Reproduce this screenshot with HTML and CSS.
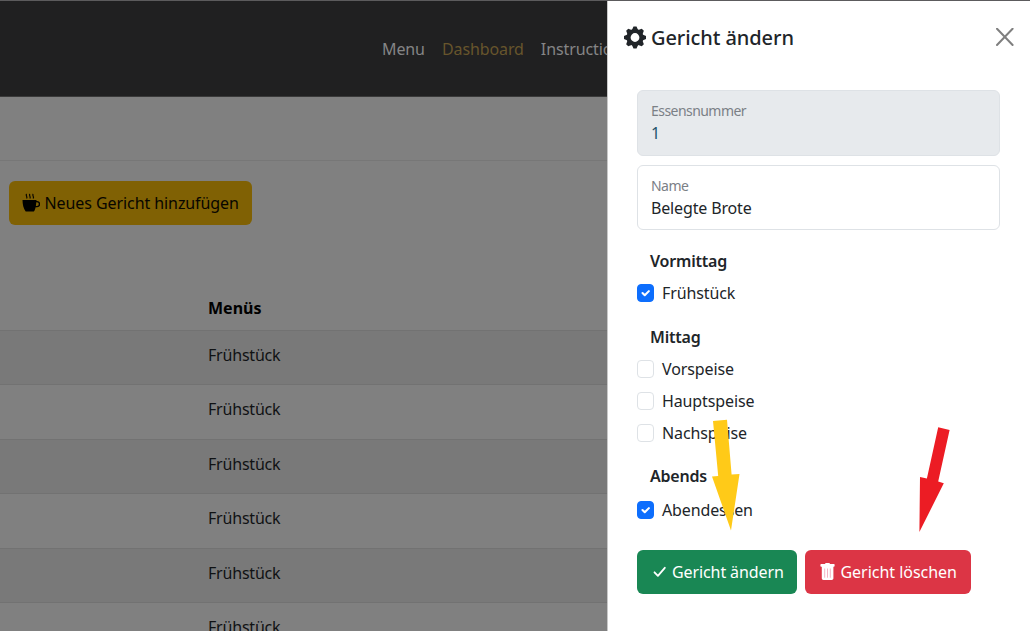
FILE: index.html
```html
<!DOCTYPE html>
<html lang="de">
<head>
<meta charset="utf-8">
<title>Gericht ändern</title>
<link rel="stylesheet" href="styles.css">
</head>
<body>
<div class="app">
  <main class="page">
    <nav class="navbar"><a class="nav-menu">Menu</a><a class="active">Dashboard</a><a class="nav-inst">Instructions</a></nav>
    <div class="subbar"></div>
    <div class="toolbar">
      <button class="btn btn-new">
        <svg width="18" height="20" viewBox="0 0 18 20"><path d="M.5 7h14v1h.6a2.600 2.600 0 0 1 0 6.200h-1.500c-.4 1.500-.8 3.300-1.800 4.300H3.700C1.400 15.500.5 11 .5 7zm13.800 2.200-.4 3.800h1a1.700 1.700 0 0 0 0-3.800z"/><path d="M4.600 1c-1.500 1.500 1.300 2.500 0 4.500M7.900 1c-1.500 1.500 1.300 2.500 0 4.500M11.200 1c-1.500 1.500 1.300 2.500 0 4.500" fill="none" stroke="#080600" stroke-width="1.200"/></svg>
        <span>Neues Gericht hinzufügen</span>
      </button>
    </div>
    <div class="table">
      <div class="head">Menüs</div>
      <div class="row odd">Frühstück</div>
      <div class="row">Frühstück</div>
      <div class="row odd">Frühstück</div>
      <div class="row">Frühstück</div>
      <div class="row odd">Frühstück</div>
      <div class="row">Frühstück</div>
    </div>
  </main>
  <aside class="panel">
    <header class="panel-head">
      <svg class="gear" width="22" height="23" viewBox="-11 -11.500 22 23">
        <circle r="6.400" fill="none" stroke="#212529" stroke-width="4"/>
        <g fill="#212529"><path id="t" d="M-3.300-7-1.500-11H1.500L3.300-7z"/><use href="#t" transform="rotate(45)"/><use href="#t" transform="rotate(90)"/><use href="#t" transform="rotate(135)"/><use href="#t" transform="rotate(180)"/><use href="#t" transform="rotate(225)"/><use href="#t" transform="rotate(270)"/><use href="#t" transform="rotate(315)"/></g>
      </svg>
      <h1>Gericht ändern</h1>
      <svg class="close" width="18" height="19" viewBox="0 0 18 19"><path d="M1 .8l15.600 16.200M16.600.8L1 17" stroke="#7f7f7f" stroke-width="2" stroke-linecap="round"/></svg>
    </header>
    <form class="form">
      <div class="field disabled"><label>Essensnummer</label><div class="value number">1</div></div>
      <div class="field"><label>Name</label><div class="value">Belegte Brote</div></div>
      <section class="group vormittag">
        <h2>Vormittag</h2>
        <div class="check"><i class="box on"><svg viewBox="0 0 20 20"><path d="M6 10l3 3 5.500-5.500"/></svg></i><span>Frühstück</span></div>
      </section>
      <section class="group mittag">
        <h2>Mittag</h2>
        <div class="check"><i class="box"></i><span>Vorspeise</span></div>
        <div class="check"><i class="box"></i><span>Hauptspeise</span></div>
        <div class="check"><i class="box"></i><span>Nachspeise</span></div>
      </section>
      <section class="group abends">
        <h2>Abends</h2>
        <div class="check"><i class="box on"><svg viewBox="0 0 20 20"><path d="M6 10l3 3 5.500-5.500"/></svg></i><span>Abendessen</span></div>
      </section>
      <div class="actions">
        <button type="button" class="btn save"><svg width="14" height="12" viewBox="0 0 14 12"><path d="M1.500 6.300l3.400 3.600L11.800 1.800" fill="none" stroke="#fff" stroke-width="1.800" stroke-linecap="round" stroke-linejoin="round"/></svg><span>Gericht ändern</span></button>
        <button type="button" class="btn delete"><svg width="15" height="18" viewBox="0 0 15 18"><path fill="#fff" fill-rule="evenodd" d="M1.200.9H5L5.600 0h3.800l.6.900h3.800c.6 0 .8.400.8.800v1.200c0 .5-.3.800-.8.800h-.4V15.300c0 1-.8 1.700-1.700 1.700H3.500c-1 0-1.700-.7-1.700-1.700V3.700h-.6c-.5 0-.8-.3-.8-.8V1.700c0-.4.3-.8.800-.8z"/><path d="M4.700 5.500v9.200M7.500 5.500v9.200M10.300 5.500v9.200" stroke="#f3b4c4" stroke-width="1"/></svg><span>Gericht löschen</span></button>
      </div>
    </form>
  </aside>
  <svg class="arrows" width="1030" height="631" viewBox="0 0 1030 631">
    <path fill="#ffca18" d="M713 421l14-1.200 4.600 54.700 7.900-.6L731 530.500l-19-54 6.200-.5z"/>
    <path fill="#ec1c24" d="M938.200 427.200l11.400 2.900-11.400 51.500 5.600 1.700L919.400 532l.6-55 6.900 1.600z"/>
  </svg>
</div>
</body>
</html>
```
FILE: styles.css
```css
* { box-sizing: border-box; }
body { margin: 0; font-family: "Noto Sans", "Open Sans", sans-serif; font-size: 16px; color: #212529; }
.app { position: relative; display: flex; width: 1030px; height: 631px; overflow: hidden; border-top: 1px solid #5c5b5d; background: #fff; }
.page { width: 607px; height: 630px; overflow: hidden; background: #808080; color: #101214; }
.navbar { display: flex; gap: 17px; height: 96px; padding-left: 382px; line-height: 97px; background: #202021; border-bottom: 1px solid #3a3a3a; color: #858586; white-space: nowrap; letter-spacing: -.1px; }
.navbar .active { color: #67552c; }
.subbar { height: 64px; border-bottom: 1px solid #777; }
.toolbar { height: 125px; padding: 20px 0 0 9px; }
.btn { display: flex; align-items: center; height: 43.500px; border: 0; border-radius: 6px; font: inherit; white-space: nowrap; }
.btn-new { width: 243px; padding: 0 0 0 13px; gap: 4.500px; background: #806104; color: #080600; letter-spacing: -.08px; }
.head { height: 45px; padding-left: 208px; border-bottom: 1px solid #727272; line-height: 44px; font-weight: 700; color: #000; }
.row { height: 54.450px; padding-left: 208px; border-bottom: 1px solid #727272; line-height: 48px; letter-spacing: -.2px; }
.odd { background: #797979; }
.panel { width: 423px; height: 630px; background: #fff; border-left: 1px solid #c8c8c8; }
.panel-head { display: flex; align-items: center; height: 73px; padding: 0 16px; }
.gear { margin-right: 5px; }
.close { margin-left: auto; }
h1 { margin: 0; font-size: 20px; font-weight: 500; letter-spacing: -.08px; }
.form { padding: 16px 30px 0 29px; }
.field { height: 65.500px; padding: 9px 13px 0; border: 1px solid #dee2e6; border-radius: 6px; }
.field + .field { margin-top: 9px; }
.field label { display: block; height: 21px; line-height: 21px; font-size: 14px; letter-spacing: -.55px; color: #7b8086; }
.field .value { line-height: 24px; letter-spacing: -.15px; }
.disabled { background: #e7eaed; }
.number { color: #24536b; }
h2 { margin: 0; padding-left: 13px; height: 32px; line-height: 32px; font-size: 16px; font-weight: 600; letter-spacing: -.2px; }
.vormittag { padding-top: 15px; height: 91px; }
.mittag { height: 139px; }
.abends { height: 90px; }
.abends h2 { height: 33.500px; }
.check { display: flex; align-items: center; height: 32px; gap: 8px; }
.check span { letter-spacing: -.12px; }
.box { display: block; width: 17px; height: 18px; border: 1px solid #dee2e6; border-radius: 4px; }
.box.on { background: #0d6efd; border-color: #0d6efd; }
.box svg { display: block; width: 15px; height: 16px; }
.box path { fill: none; stroke: #fff; stroke-width: 2.800; stroke-linecap: round; stroke-linejoin: round; }
.actions { display: flex; gap: 8px; }
.save, .delete { color: #fff; padding: 0; letter-spacing: -.1px; }
.save { width: 160px; padding-left: 16px; gap: 5px; background: #198754; }
.delete { width: 166px; padding-left: 15px; gap: 5.500px; letter-spacing: -.03px; background: #dc3545; }
.arrows { position: absolute; left: 0; top: -1px; }
```
